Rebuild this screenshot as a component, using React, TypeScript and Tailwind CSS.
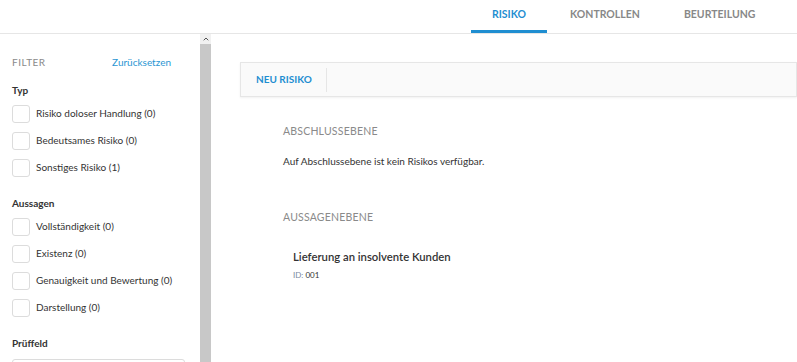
import { ChevronUp } from "lucide-react";

const TYP = ["Risiko doloser Handlung (0)", "Bedeutsames Risiko (0)", "Sonstiges Risiko (1)"];
const AUSSAGEN = [
  "Vollständigkeit (0)",
  "Existenz (0)",
  "Genauigkeit und Bewertung (0)",
  "Darstellung (0)",
];

function CheckRow({ label }: { label: string }) {
  return (
    <label className="flex items-center h-[27px]">
      <span className="w-[18px] h-[18px] shrink-0 rounded-[3px] border border-[#dcdcdc] bg-white" />
      <span className="ml-[6px] whitespace-nowrap text-[10px] text-[#333]">{label}</span>
    </label>
  );
}

function Tab({ label, active }: { label: string; active?: boolean }) {
  return (
    <div
      className={
        "h-full flex items-center px-[21px] text-[10.5px] font-bold border-b-[3px] " +
        (active ? "text-[#1f8ed1] border-[#1f8ed1]" : "text-[#888] border-transparent")
      }
    >
      {label}
    </div>
  );
}

export default function App() {
  return (
    <div className="w-[797px] h-[362px] overflow-hidden bg-white font-['Lato','Liberation_Sans',sans-serif] flex flex-col">
      {/* Header tabs */}
      <div className="h-[34px] shrink-0 border-b border-[#e6e6e6] flex items-stretch gap-[2px] pl-[471px]">
        <Tab label="RISIKO" active />
        <Tab label="KONTROLLEN" />
        <Tab label="BEURTEILUNG" />
      </div>

      <div className="flex flex-1 min-h-0">
        {/* Sidebar */}
        <aside className="w-[200px] shrink-0 pl-[12px] pt-[22px]">
          <div className="flex items-center justify-between w-[159px] h-[12px]">
            <span className="text-[10px] tracking-[0.5px] text-[#8a8a8a]">FILTER</span>
            <span className="text-[10px] text-[#2a96d3]">Zurücksetzen</span>
          </div>

          <div className="mt-[15px] text-[10px] font-bold text-[#333]">Typ</div>
          <div className="mt-[2px]">
            {TYP.map((t) => (
              <CheckRow key={t} label={t} />
            ))}
          </div>

          <div className="mt-[15px] text-[10px] font-bold text-[#333]">Aussagen</div>
          <div className="mt-[2px]">
            {AUSSAGEN.map((t) => (
              <CheckRow key={t} label={t} />
            ))}
          </div>

          <div className="mt-[15px] text-[10px] font-bold text-[#333]">Prüffeld</div>
          <div className="mt-[8px] h-[24px] w-[173px] rounded-[3px] border border-[#dcdcdc]" />
        </aside>

        {/* Scrollbar */}
        <div className="w-[11px] shrink-0 flex flex-col bg-[#c8c8c8]">
          <div className="h-[10px] bg-[#f1f1f1] flex items-center justify-center">
            <ChevronUp className="w-[8px] h-[8px] text-[#555]" strokeWidth={3} />
          </div>
        </div>

        {/* Main */}
        <main className="flex-1 pl-[29px] pt-[28px]">
          <div className="h-[35px] bg-[#fafafa] border border-[#e6e6e6] shadow-[0_1px_2px_rgba(0,0,0,0.06)] flex items-center">
            <span className="pl-[15px] pr-[14px] text-[10px] font-bold text-[#1f8ed1]">NEU RISIKO</span>
            <div className="w-px h-[24px] bg-[#e6e6e6]" />
          </div>

          <div className="pl-[43px]">
            <div className="mt-[27px] text-[10.5px] text-[#8a8a8a] tracking-[0.2px]">ABSCHLUSSEBENE</div>
            <div className="mt-[14px] text-[10px] text-[#333]">Auf Abschlussebene ist kein Risikos verfügbar.</div>

            <div className="mt-[41px] text-[10.5px] text-[#8a8a8a] tracking-[0.2px]">AUSSAGENEBENE</div>

            <div className="pl-[10px] mt-[23px]">
              <div className="text-[11.3px] font-semibold text-[#333]">Lieferung an insolvente Kunden</div>
              <div className="mt-[4px] text-[8px] text-[#333]">
                <span className="text-[#7a8aa0]">ID:</span> 001
              </div>
            </div>
          </div>
        </main>
      </div>
    </div>
  );
}
